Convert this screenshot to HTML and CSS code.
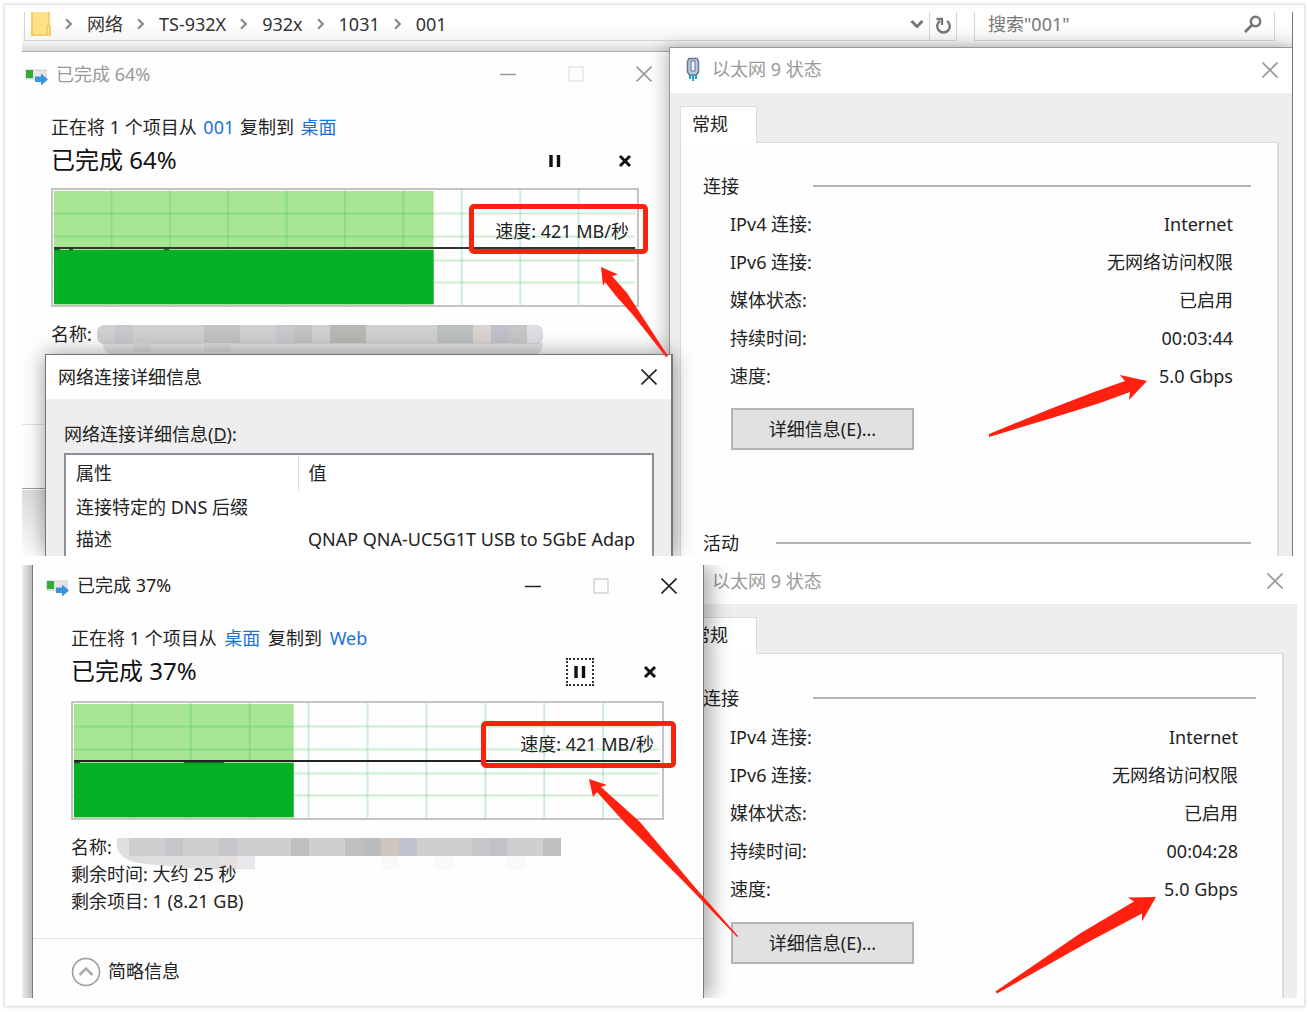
FILE: index.html
```html
<!DOCTYPE html>
<html lang="zh-CN">
<head>
<meta charset="utf-8">
<title>网络传输速度</title>
<link rel="stylesheet" href="styles.css">
</head>
<body>
<svg class="defs" aria-hidden="true">
  <symbol id="copy" viewBox="0 0 23 17">
    <rect x="1" y="2" width="20" height="9" fill="#e6e6e6" stroke="#cfcfcf"/>
    <rect x="1" y="2" width="7" height="8" fill="#2fae36"/>
    <path d="M10 8.500h6V5.500l7 6-7 6v-3.500h-6z" fill="#3a94dd"/>
  </symbol>
  <symbol id="min" viewBox="0 0 16 16"><path d="M0 8.500h16" stroke="currentColor" stroke-width="1.500"/></symbol>
  <symbol id="max" viewBox="0 0 16 16"><rect x="1" y="1" width="14" height="14" fill="none" stroke="currentColor" stroke-width="1.300"/></symbol>
  <symbol id="close" viewBox="0 0 16 16"><path d="M.500.500l15 15M15.500.500l-15 15" stroke="currentColor" stroke-width="1.600"/></symbol>
  <symbol id="pause" viewBox="0 0 16 16"><path d="M4 2v12M11.500 2v12" stroke="#111" stroke-width="3.400"/></symbol>
  <symbol id="cancel" viewBox="0 0 16 16"><path d="M3 3l10 10M13 3L3 13" stroke="#111" stroke-width="3"/></symbol>
  <symbol id="sep" viewBox="0 0 8 10"><path d="M1.500 1l4 4-4 4" fill="none" stroke="#888" stroke-width="1.800"/></symbol>
</svg>
<main class="card">
  <section class="shot shot-read">
    <header class="explorer">
      <nav class="address">
        <svg class="folder" viewBox="0 0 20 24"><path d="M0 0h18v13h1.500v11H0z" fill="#ffe288"/><path d="M1 0v23h18v-9h-3v9M18 0v14" fill="none" stroke="#edc75c" stroke-width="1.500"/></svg>
        <svg class="sep"><use href="#sep"/></svg><a href="#">网络</a>
        <svg class="sep"><use href="#sep"/></svg><a href="#">TS-932X</a>
        <svg class="sep"><use href="#sep"/></svg><a href="#">932x</a>
        <svg class="sep"><use href="#sep"/></svg><a href="#">1031</a>
        <svg class="sep"><use href="#sep"/></svg><a href="#">001</a>
        <button class="plain history" aria-label="历史"><svg width="14" height="10" viewBox="0 0 14 10"><path d="M1.500 2L7 7.500 12.500 2" fill="none" stroke="#777" stroke-width="3"/></svg></button>
        <button class="plain refresh" aria-label="刷新"><svg width="18" height="20" viewBox="0 0 18 20"><path d="M13 5a6.300 6.300 0 1 1-7 0" fill="none" stroke="#777" stroke-width="2.500"/><path d="M2.500 3H8V9" fill="none" stroke="#777" stroke-width="2.300"/></svg></button>
      </nav>
      <label class="search"><input type="text" placeholder="搜索&quot;001&quot;" aria-label="搜索"><svg width="18" height="18" viewBox="0 0 18 18"><circle cx="11.500" cy="6.500" r="4.700" fill="none" stroke="#777" stroke-width="2.500"/><path d="M8 10l-7 7" stroke="#777" stroke-width="2.800"/></svg></label>
    </header>
    <div class="desk">
      <div class="left">
        <article class="transfer inactive">
          <header class="titlebar">
            <svg class="copy"><use href="#copy"/></svg><h2>已完成 64%</h2>
            <div class="controls">
              <button class="plain" aria-label="最小化"><svg><use href="#min"/></svg></button>
              <button class="plain faint" aria-label="最大化"><svg><use href="#max"/></svg></button>
              <button class="plain" aria-label="关闭"><svg><use href="#close"/></svg></button>
            </div>
          </header>
          <div class="progress">
            <p class="route">正在将 1 个项目从 <a href="#">001</a> 复制到 <a href="#">桌面</a></p>
            <div class="state"><strong>已完成 64%</strong>
              <button class="plain act" aria-label="暂停"><svg><use href="#pause"/></svg></button>
              <button class="plain act" aria-label="取消"><svg><use href="#cancel"/></svg></button>
            </div>
            <div class="chart">
              <svg class="plot">
                <rect width="65%" height="100%" fill="#a7e592" x="1" y="1"/>
                <g class="rules"><path d="M0 23.500h582M0 46.500h582M0 70.500h582M0 92.500h582"/><line x1="10%" x2="10%" y2="100%"/><line x1="20%" x2="20%" y2="100%"/><line x1="30%" x2="30%" y2="100%"/><line x1="40%" x2="40%" y2="100%"/><line x1="50%" x2="50%" y2="100%"/><line x1="60%" x2="60%" y2="100%"/><line x1="70%" x2="70%" y2="100%"/><line x1="80%" x2="80%" y2="100%"/><line x1="90%" x2="90%" y2="100%"/></g>
                <rect x="1" y="60" width="65%" height="54" fill="#06b025"/>
                <path d="M1 59.500h6M16 59.500h4M111 59.500h5" stroke="#087a1e" stroke-width="2"/>
                <line x1="1" x2="99.700%" y1="58" y2="58" stroke="#333" stroke-width="2"/>
              </svg>
              <span class="speed">速度: 421 MB/秒</span>
              <div class="mark"></div>
            </div>
            <div class="facts">
              <p>名称:<svg class="smudge" viewBox="0 0 446 32">
                <path d="M6 18h440q0 12-14 13H20Q6 30 6 18z" fill="#e2e2e2"/>
                <rect width="446" height="19" rx="7" fill="#d0cfd0"/>
                <path d="M18 0h18v18H18zM179 0h18v18h-18z" fill="#c7c8cc"/><path d="M107 0h36v18h-36zM197 0h18v18h-18z" fill="#c3c2c3"/><path d="M233 0h36v18h-36z" fill="#b8b7b4"/><path d="M340 0h36v18h-36z" fill="#bcbfbf"/><path d="M376 0h18v18h-18z" fill="#d9d2cd"/><path d="M394 0h18v18h-18z" fill="#bfc0c9"/><path d="M412 0h18v18h-18z" fill="#c6c5c5"/><path d="M430 0h9q7 1 7 9t-7 9h-9z" fill="#dedfe2"/>
                <path d="M36 18h18v9H36zM107 18h27v9h-27z" fill="#d9d9da"/></svg></p>
            </div>
          </div>
          <footer class="more"></footer>
        </article>
        <article class="details">
          <header class="titlebar"><h2>网络连接详细信息</h2><button class="plain" aria-label="关闭"><svg><use href="#close"/></svg></button></header>
          <div class="details-body">
            <p id="details-label">网络连接详细信息(<u>D</u>):</p>
            <div class="list">
              <table aria-labelledby="details-label">
                <thead><tr><th>属性</th><th>值</th></tr></thead>
                <tbody><tr><td>连接特定的 DNS 后缀</td><td></td></tr><tr><td>描述</td><td>QNAP QNA-UC5G1T USB to 5GbE Adap</td></tr></tbody>
              </table>
            </div>
          </div>
        </article>
      </div>
      <article class="status">
        <header class="titlebar">
          <svg class="plug" viewBox="0 0 14 26"><path d="M3 1.500h8l1.500 3V15l-2 3h-7l-2-3V4.500z" fill="#b9cbe0" stroke="#66788f" stroke-width="1.500"/><rect x="5" y="4" width="4" height="10" fill="#eef4fa" stroke="#66788f"/><path d="M4 18v4M7 18v6M10 18v4" stroke="#1d9bd0" stroke-width="2"/></svg>
          <h2>以太网 9 状态</h2><button class="plain" aria-label="关闭"><svg><use href="#close"/></svg></button>
        </header>
        <div class="status-body">
          <button class="tab">常规</button>
          <div class="panel">
            <h3>连接</h3>
            <dl>
              <div><dt>IPv4 连接:</dt><dd>Internet</dd></div>
              <div><dt>IPv6 连接:</dt><dd>无网络访问权限</dd></div>
              <div><dt>媒体状态:</dt><dd>已启用</dd></div>
              <div><dt>持续时间:</dt><dd>00:03:44</dd></div>
              <div><dt>速度:</dt><dd>5.0 Gbps</dd></div>
            </dl>
            <button class="push">详细信息(E)...</button>
            <h3 class="activity">活动</h3>
          </div>
        </div>
      </article>
    </div>
    <svg class="arrows"><g transform="translate(-22 -12)">
      <path d="M601 267l17 7.500-6 1.500 15 17 13 20 28 43-2 1-33-42-17-19-11-14-2 4z"/>
      <path d="M1147 381l-27-6 5 6-31 11-44 17-61 25v3l63-19 48-15 30-11-1 8z"/>
    </g></svg>
  </section>

  <section class="shot shot-write">
    <div class="backdrop"></div>
    <article class="transfer">
      <header class="titlebar">
        <svg class="copy"><use href="#copy"/></svg><h2>已完成 37%</h2>
        <div class="controls">
          <button class="plain" aria-label="最小化"><svg><use href="#min"/></svg></button>
          <button class="plain faint" aria-label="最大化"><svg><use href="#max"/></svg></button>
          <button class="plain" aria-label="关闭"><svg><use href="#close"/></svg></button>
        </div>
      </header>
      <div class="progress">
        <p class="route">正在将 1 个项目从 <a href="#">桌面</a> 复制到 <a href="#">Web</a></p>
        <div class="state"><strong>已完成 37%</strong>
          <button class="plain act focused" aria-label="暂停"><svg><use href="#pause"/></svg></button>
          <button class="plain act" aria-label="取消"><svg><use href="#cancel"/></svg></button>
        </div>
        <div class="chart">
          <svg class="plot">
            <rect x="1" y="1" width="37.300%" height="100%" fill="#a7e592"/>
            <g class="rules"><path d="M0 23.500h586M0 46.500h586M0 70.500h586M0 92.500h586"/><line x1="10%" x2="10%" y2="100%"/><line x1="20%" x2="20%" y2="100%"/><line x1="30%" x2="30%" y2="100%"/><line x1="40%" x2="40%" y2="100%"/><line x1="50%" x2="50%" y2="100%"/><line x1="60%" x2="60%" y2="100%"/><line x1="70%" x2="70%" y2="100%"/><line x1="80%" x2="80%" y2="100%"/><line x1="90%" x2="90%" y2="100%"/></g>
            <rect x="1" y="60" width="37.300%" height="54" fill="#06b025"/>
            <path d="M1 59.500h6M111 59.500h40" stroke="#087a1e" stroke-width="2"/>
            <line x1="1" x2="99.700%" y1="58" y2="58" stroke="#222" stroke-width="2"/>
          </svg>
          <span class="speed">速度: 421 MB/秒</span>
          <div class="mark"></div>
        </div>
        <div class="facts">
          <p>名称:<svg class="smudge" viewBox="0 0 446 32">
            <path d="M0 0h444v18H138v13H80L30 26Q2 24 0 8z" fill="#dfdfe0"/>
            <path d="M12 0h432v18H12z" fill="#cfcfd0"/>
            <path d="M48 0h18v18H48zM102 0h18v18h-18zM355 0h18v18h-18z" fill="#c6c7ca"/><path d="M174 0h18v18h-18zM228 0h18v18h-18zM426 0h18v18h-18z" fill="#c1c0c1"/><path d="M246 0h18v18h-18z" fill="#bbbdbd"/><path d="M264 0h18v18h-18z" fill="#d0c6c0"/><path d="M282 0h18v18h-18z" fill="#bec2ce"/><path d="M372 0h18v18h-18z" fill="#c1c2c5"/>
            <path d="M264 18h18v14h-18zM318 18h18v14h-18zM390 18h18v14h-18z" fill="#f9f9fa"/><path d="M102 18h18v12h-18z" fill="#e6e0dd"/><path d="M120 18h18v12h-18z" fill="#e6e8ec"/></svg></p>
          <p>剩余时间: 大约 25 秒</p>
          <p>剩余项目: 1 (8.21 GB)</p>
        </div>
      </div>
      <footer class="more">
        <button class="plain toggle"><svg width="30" height="30" viewBox="0 0 30 30"><circle cx="15" cy="15" r="13.500" fill="none" stroke="#999" stroke-width="1.500"/><path d="M8.500 18l6.500-6.500 6.500 6.500" fill="none" stroke="#aaa" stroke-width="2.500"/></svg>简略信息</button>
      </footer>
    </article>
    <article class="status">
      <header class="titlebar">
        <svg class="plug"></svg>
        <h2>以太网 9 状态</h2><button class="plain" aria-label="关闭"><svg><use href="#close"/></svg></button>
      </header>
      <div class="status-body">
        <button class="tab">常规</button>
        <div class="panel">
          <h3>连接</h3>
          <dl>
            <div><dt>IPv4 连接:</dt><dd>Internet</dd></div>
            <div><dt>IPv6 连接:</dt><dd>无网络访问权限</dd></div>
            <div><dt>媒体状态:</dt><dd>已启用</dd></div>
            <div><dt>持续时间:</dt><dd>00:04:28</dd></div>
            <div><dt>速度:</dt><dd>5.0 Gbps</dd></div>
          </dl>
          <button class="push">详细信息(E)...</button>
        </div>
      </div>
    </article>
    <svg class="arrows"><g transform="translate(-22 -565)">
      <path d="M589 779l18 6-6 2 39 35 53 63 45 51-1 1-52-54-60-60-28-31-4 5z"/>
      <path d="M1156 897l-28 .500 6 4-54 32-84.500 58 1.500 2 96-54 49-26v8z"/>
    </g></svg>
  </section>
</main>
</body>
</html>
```
FILE: styles.css
```css
* { box-sizing: border-box; }

body {
  margin: 0;
  padding: 4px;
  background: #fff;
  color: #222;
  font: 18px/27px "Noto Sans", "Noto Sans CJK SC", sans-serif;
}

h2, h3, p, dl, dd { margin: 0; font-size: 18px; font-weight: 400; }
a { color: #1a74d8; text-decoration: none; }
svg { display: block; flex: none; }
.defs { position: absolute; width: 0; height: 0; }

button, input { font: inherit; color: inherit; }
.plain { display: flex; align-items: center; justify-content: center; padding: 0; border: 0; background: none; }

.card {
  padding: 7px 7px 8px 17px;
  border: 1px solid #e4e4e4;
  box-shadow: 0 0 3px #ddd;
}

.shot { position: relative; }
.shot-read { margin: 0 4px 9px 0; border-right: 1px solid #777; }

/* explorer address bar */
.explorer {
  display: flex;
  gap: 17px;
  height: 40px;
  padding: 0 17px 10px 2px;
  background: linear-gradient(#fff 30%, #f4f4f4 75%, #dcdcdc);
  border-bottom: 1px solid #aaa;
}
.address, .search {
  display: flex;
  align-items: center;
  border: solid #d4d4d4;
  border-width: 0 1px 1px;
}
.address { flex: 1; padding: 0 0 4px 6px; line-height: 24px; }
.address a { color: #333; }
.folder { width: 20px; height: 24px; align-self: flex-start; }
.sep { width: 36px; height: 12px; }
.history { width: 24px; margin-left: auto; }
.refresh { width: 27px; height: 29px; margin-bottom: -4px; border-left: 1px solid #d4d4d4; }
.search { width: 301px; padding: 0 12px 4px 13px; }
.search input { flex: 1; min-width: 0; padding: 0; border: 0; outline: 0; background: none; height: 26px; }
.search input::placeholder { color: #777; opacity: 1; }

/* windows */
.desk { display: grid; grid-template-columns: 647fr 623fr; }
.left { position: relative; background: linear-gradient(#ddd, #fdfdfd) bottom / 100% 66px no-repeat; }
.titlebar { display: flex; align-items: center; height: 44px; }
.titlebar button { margin-left: auto; }
.titlebar button svg { width: 16px; height: 16px; }
.controls { display: flex; gap: 52px; margin-left: auto; }
.inactive .titlebar { color: #999; }
.faint { color: #ccc; }
.inactive .faint { color: #e4e4e4; }

.transfer { background: #fefefe; border-bottom: 1px solid #999; }
.transfer .titlebar { padding: 0 17px 0 3px; gap: 8px; }
.copy { width: 23px; height: 17px; margin-top: 4px; }
.progress { padding: 15px 30px 22px 29px; }
.route { line-height: 32px; }
.route a { margin: 0 1px 0 2px; }
.state { display: flex; align-items: center; gap: 42px; height: 35px; }
.state strong { flex: 1; padding-bottom: 3px; font-size: 24px; font-weight: 400; color: #111; }
.act { width: 28px; height: 28px; }
.act svg { width: 16px; height: 16px; }
.focused { outline: 2px dotted #333; outline-offset: -2px; }

.chart {
  position: relative;
  height: 119px;
  margin-top: 10px;
  border: 2px solid #c4c4c4;
}
.plot { width: 100%; height: 100%; }
.rules { stroke: #3cc45a; stroke-opacity: .25; stroke-width: 2; fill: none; }
.speed { position: absolute; right: 8px; top: 28px; }
.mark {
  position: absolute;
  right: -11px;
  top: 14px;
  width: 179px;
  height: 50px;
  border: 5px solid #ff2010;
  border-radius: 5px;
}
.facts { min-height: 81px; margin-top: 14px; }
.facts p { display: flex; height: 27px; }
.smudge { width: 446px; height: 32px; margin: 4px 0 0 5px; }
.more { height: 64px; border-top: 1px solid #e2e2e2; }
.toggle { gap: 7px; }

/* connection details */
.details {
  position: absolute;
  z-index: 3;
  top: 302px;
  bottom: 0;
  left: 23px;
  right: -4px;
  display: flex;
  flex-direction: column;
  background: #eee;
  border: solid #777;
  border-width: 1px 2px 0 1px;
  box-shadow: 0 0 20px rgba(0, 0, 0, .4);
  clip-path: inset(-24px -50px 0 -24px);
}
.details .titlebar { padding: 0 14px 0 12px; background: #fff; }
.details-body { flex: 1; display: flex; flex-direction: column; min-height: 0; padding: 22px 17px 0 18px; }
.list { flex: 1; min-height: 0; margin-top: 5px; overflow: hidden; background: #fff; border: solid #8a8f98; border-width: 2px 2px 0; }
.list table { width: 100%; table-layout: fixed; border-collapse: collapse; }
.list th, .list td { height: 32px; padding: 0 0 0 10px; text-align: left; font-weight: 400; white-space: nowrap; }
.list th { height: 36px; }
.list th:first-child { width: 232px; border-right: 1px solid #ddd; }

/* adapter status */
.status {
  position: relative;
  z-index: 2;
  display: flex;
  flex-direction: column;
  margin-top: -5px;
  background: #eee;
  border: solid #999;
  border-width: 1px 0 0 1px;
  box-shadow: -4px 0 16px rgba(0, 0, 0, .25);
  clip-path: inset(-16px 0 0 -24px);
}
.status .titlebar { padding: 0 14px 2px 16px; gap: 12px; height: 45px; background: #fff; color: #999; }
.plug { width: 14px; height: 26px; }
.status-body { flex: 1; display: flex; flex-direction: column; padding: 13px 13px 0 10px; }
.tab {
  position: relative;
  align-self: flex-start;
  width: 77px;
  height: 37px;
  margin-bottom: -1px;
  padding: 0 0 2px 11px;
  background: #fff;
  border: 1px solid #dcdcdc;
  border-bottom: 0;
  text-align: left;
}
.panel { flex: 1; padding: 24px 26px 0 22px; background: #fefefe; border: solid #dcdcdc; border-width: 1px 2px 0 1px; }
.panel h3 { display: flex; align-items: center; height: 38px; }
.panel h3::after { content: ""; flex: 1; height: 2px; margin-left: 74px; background: #b4b4b4; }
.panel dl { padding: 0 18px 0 27px; }
.panel dl div { display: flex; justify-content: space-between; line-height: 38px; }
.push {
  width: 183px;
  height: 42px;
  margin: 13px 0 0 28px;
  padding: 0;
  background: #e1e1e1;
  border: 2px solid #b4b4b4;
}
.panel .activity { height: 32px; margin-top: 74px; padding-top: 6px; }
.panel .activity::after { margin-left: 37px; }

/* second capture */
.shot-write { display: grid; grid-template-columns: 10px 672fr 593fr; }
.backdrop { background: linear-gradient(90deg, #eee, #bbb); }
.shot-write .transfer { position: relative; z-index: 3; border: solid #777; border-width: 0 1px; box-shadow: 8px 0 18px rgba(0, 0, 0, .3); clip-path: inset(0 -40px 0 0); }
.shot-write .transfer .titlebar { height: 41px; padding: 0 26px 0 13px; }
.shot-write .progress { padding: 16px 39px 23px 38px; }
.shot-write .route a { margin: 0 3px; }
.shot-write .state { height: 36px; }
.shot-write .chart { margin-top: 11px; }
.shot-write .mark { right: -14px; top: 18px; width: 195px; height: 47px; }
.shot-write .more { display: flex; align-items: center; height: 60px; padding: 6px 0 0 38px; }
.shot-write .status { z-index: 1; margin: 0 0 0 -35px; border-top: 0; box-shadow: none; clip-path: none; }
.shot-write .status .titlebar { height: 39px; padding-bottom: 7px; }
.shot-write .panel { padding-top: 25px; }
.shot-write .panel dl { padding-top: 1px; }
.shot-write .push { margin-top: 14px; }

.arrows { position: absolute; z-index: 5; inset: 0; width: 100%; height: 100%; overflow: visible; fill: #ff2010; pointer-events: none; }
```
